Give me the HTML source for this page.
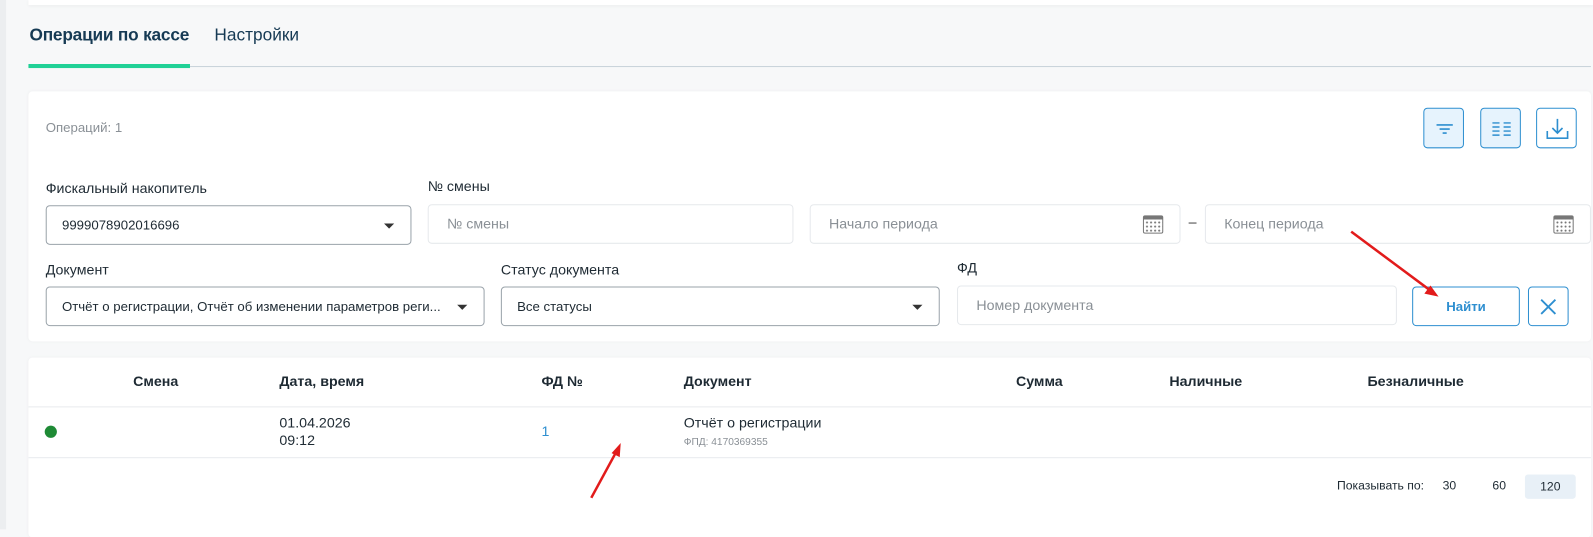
<!DOCTYPE html>
<html><head><meta charset="utf-8"><style>
*{box-sizing:border-box;margin:0;padding:0}
body{width:1593px;height:529px;overflow:hidden;background:#f7f8f9;font-family:"Liberation Sans",sans-serif;color:#1e2a33}
#w{position:absolute;left:0;top:0;width:1568px;height:521px;transform:scale(1.01594);transform-origin:0 0}
.abs{position:absolute}
.strip{left:0;top:0;width:6px;height:521px;background:#eceef0}
.top{left:28px;top:0;width:1540px;height:5px;background:#fff;box-shadow:0 1px 3px rgba(0,0,0,.05)}
.tab1{left:29px;top:25px;font-size:17px;font-weight:bold;color:#163a54;letter-spacing:-0.2px}
.tab2{left:211px;top:25px;font-size:17px;color:#163a54}
.tabline{left:28px;top:65px;width:1538px;height:1px;background:#c9d2da}
.tabact{left:28px;top:63px;width:159px;height:4px;background:#20d196}
.card{background:#fff;border-radius:4px;box-shadow:0 0 3px rgba(0,0,0,.04)}
.lbl{font-size:14px;color:#1e2a33}
.inp{border:1px solid #e6e9ec;border-radius:4px;height:39px;font-size:14px;color:#8a9096;padding-left:18px;line-height:37px;background:#fff;white-space:nowrap;overflow:hidden}
.sel{border-color:#9aa3aa;color:#1e2a33;padding-left:15px}
.caret{position:absolute;right:16px;top:17px;width:0;height:0;border-left:5px solid transparent;border-right:5px solid transparent;border-top:5px solid #333}
.ib{width:40px;height:40px;border:1px solid #2e8fd0;border-radius:4px}
.th{font-family:"Liberation Sans Narrow","Liberation Sans",sans-serif;font-weight:bold;font-size:14px;color:#1e2a33;top:367px}
.cal{position:absolute;right:16px;top:10px;width:20px;height:18px;border:1.5px solid #777;border-top-width:4px;border-radius:2px;background:radial-gradient(circle,#777 0.8px,transparent 1.2px) 1px 1px/4px 4px}
</style></head><body><div id="w">
<div class="abs strip"></div>
<div class="abs top"></div>
<div class="abs tab1">Операции по кассе</div>
<div class="abs tab2">Настройки</div>
<div class="abs tabline"></div>
<div class="abs tabact"></div>

<div class="abs card" style="left:28px;top:90px;width:1538px;height:246px"></div>
<div class="abs" style="left:45px;top:118px;font-size:13px;color:#8a9096">Операций: 1</div>
<div class="abs ib" style="left:1401px;top:106px;background:#e6f3fd"><svg width="40" height="40"><path d="M12 16h16M15 20h10M18 24h4" stroke="#2e8fd0" stroke-width="1.6"/></svg></div>
<div class="abs ib" style="left:1457px;top:106px;background:#e6f3fd"><svg width="40" height="40"><path d="M11 14h7M22 14h7M11 18h7M22 18h7M11 22h7M22 22h7M11 26h7M22 26h7" stroke="#2e8fd0" stroke-width="1.4"/></svg></div>
<div class="abs ib" style="left:1512px;top:106px;background:#fff"><svg width="40" height="40"><path d="M20 10v14M15 19l5 5 5-5M10 22v7h20v-7" stroke="#2e8fd0" stroke-width="1.6" fill="none"/></svg></div>

<div class="abs lbl" style="left:45px;top:177px">Фискальный накопитель</div>
<div class="abs inp sel" style="left:45px;top:202px;width:360px;font-size:13px">9999078902016696<span class="caret"></span></div>
<div class="abs lbl" style="left:421px;top:175px">№ смены</div>
<div class="abs inp" style="left:421px;top:201px;width:360px">№ смены</div>
<div class="abs inp" style="left:797px;top:201px;width:365px">Начало периода<span class="cal"></span></div>
<div class="abs" style="left:1170px;top:210px;font-size:14px;color:#333">–</div>
<div class="abs inp" style="left:1186px;top:201px;width:380px">Конец периода<span class="cal"></span></div>

<div class="abs lbl" style="left:45px;top:257px">Документ</div>
<div class="abs inp sel" style="left:45px;top:282px;width:432px;font-size:13px">Отчёт о регистрации, Отчёт об изменении параметров реги...<span class="caret"></span></div>
<div class="abs lbl" style="left:493px;top:257px">Статус документа</div>
<div class="abs inp sel" style="left:493px;top:282px;width:432px;font-size:13px">Все статусы<span class="caret"></span></div>
<div class="abs lbl" style="left:942px;top:255px">ФД</div>
<div class="abs inp" style="left:942px;top:281px;width:433px">Номер документа</div>
<div class="abs" style="left:1390px;top:282px;width:106px;height:39px;border:1px solid #2e8fd0;border-radius:4px;text-align:center;line-height:37px;font-size:13px;font-weight:bold;color:#2e8fd0">Найти</div>
<div class="abs" style="left:1504px;top:282px;width:40px;height:39px;border:1px solid #2e8fd0;border-radius:4px"><svg width="38" height="37"><path d="M12 12l14 14M26 12l-14 14" stroke="#2e8fd0" stroke-width="1.8"/></svg></div>

<div class="abs card" style="left:28px;top:352px;width:1538px;height:177px"></div>
<div class="abs th" style="left:131px">Смена</div>
<div class="abs th" style="left:275px">Дата, время</div>
<div class="abs th" style="left:533px">ФД №</div>
<div class="abs th" style="left:673px">Документ</div>
<div class="abs th" style="left:1000px">Сумма</div>
<div class="abs th" style="left:1151px">Наличные</div>
<div class="abs th" style="left:1346px">Безналичные</div>
<div class="abs" style="left:28px;top:400px;width:1538px;height:1px;background:#e8ebee"></div>
<div class="abs" style="left:44px;top:419px;width:12px;height:12px;border-radius:50%;background:#1e8a35"></div>
<div class="abs" style="left:275px;top:408px;font-size:14px;line-height:17px">01.04.2026<br>09:12</div>
<div class="abs" style="left:533px;top:416px;font-size:14px;color:#2e8fd0">1</div>
<div class="abs" style="left:673px;top:408px;font-size:14px">Отчёт о регистрации</div>
<div class="abs" style="left:673px;top:430px;font-size:10px;color:#8a9096">ФПД: 4170369355</div>
<div class="abs" style="left:28px;top:450px;width:1538px;height:1px;background:#e8ebee"></div>
<div class="abs" style="left:1316px;top:471px;font-size:12px">Показывать по:</div>
<div class="abs" style="left:1420px;top:471px;font-size:12px">30</div>
<div class="abs" style="left:1469px;top:471px;font-size:12px">60</div>
<div class="abs" style="left:1501px;top:467px;width:50px;height:24px;background:#e8f0f7;border-radius:3px;font-size:12px;text-align:center;line-height:24px">120</div>

<svg class="abs" style="left:0;top:0" width="1568" height="521">
<path d="M1330 228L1408 286" stroke="#e21b1b" stroke-width="2.5"/><path d="M1416 292l-14-3 6-8z" fill="#e21b1b"/>
<path d="M582 490L607 444" stroke="#e21b1b" stroke-width="2.5"/><path d="M611 436l-1 14-8-4z" fill="#e21b1b"/>
</svg>
</div></body></html>
